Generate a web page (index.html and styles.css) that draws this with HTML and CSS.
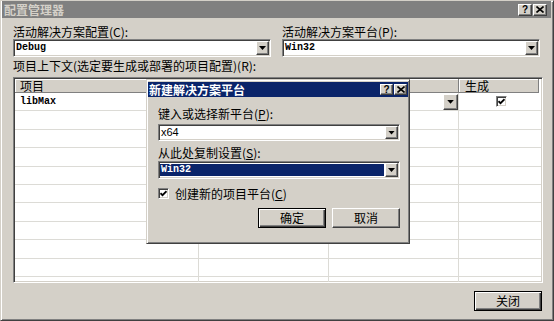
FILE: index.html
```html
<!DOCTYPE html>
<html lang="zh-CN">
<head>
	<meta charset="UTF-8">
	<title>配置管理器</title>
	<link rel="stylesheet" href="styles.css">
</head>
<body>
	<div class="win">
		<div class="caption inactive">
			<span class="caption-text">配置管理器</span>
			<span class="caption-btns">
				<span class="cbtn help">?</span>
				<span class="cbtn"><svg width="8" height="7" viewBox="0 0 8 7"><path d="M0.5 0.5L7.5 6.5M7.5 0.5L0.5 6.5" stroke="#000" stroke-width="1.6" fill="none"/></svg></span>
			</span>
		</div>
		<div class="body">
			<div class="fields">
				<div class="field">
					<div class="label">活动解决方案配置(C):</div>
					<div class="combo"><span class="combo-text mono">Debug</span><span class="drop"></span></div>
				</div>
				<div class="field">
					<div class="label">活动解决方案平台(P):</div>
					<div class="combo"><span class="combo-text mono">Win32</span><span class="drop"></span></div>
				</div>
			</div>
			<div class="label ctx">项目上下文(选定要生成或部署的项目配置)(R):</div>
			<div class="grid">
				<div class="row head">
					<div class="hcell">项目</div>
					<div class="hcell"></div>
					<div class="hcell"></div>
					<div class="hcell">生成</div>
				</div>
				<div class="row">
					<div class="cell mono">libMax</div>
					<div class="cell"><span class="grow"></span><span class="drop small"></span></div>
					<div class="cell"><span class="grow"></span><span class="drop small"></span></div>
					<div class="cell center"><span class="check"><svg width="7" height="7" viewBox="0 0 7 7"><path d="M0.5 3.2L2.5 5.2L6.5 1.2" stroke="#000" stroke-width="1.7" fill="none"/></svg></span></div>
				</div>
				<div class="row"><div class="cell"></div><div class="cell"></div><div class="cell"></div><div class="cell"></div></div>
				<div class="row"><div class="cell"></div><div class="cell"></div><div class="cell"></div><div class="cell"></div></div>
				<div class="row"><div class="cell"></div><div class="cell"></div><div class="cell"></div><div class="cell"></div></div>
				<div class="row"><div class="cell"></div><div class="cell"></div><div class="cell"></div><div class="cell"></div></div>
				<div class="row"><div class="cell"></div><div class="cell"></div><div class="cell"></div><div class="cell"></div></div>
				<div class="row"><div class="cell"></div><div class="cell"></div><div class="cell"></div><div class="cell"></div></div>
				<div class="row"><div class="cell"></div><div class="cell"></div><div class="cell"></div><div class="cell"></div></div>
				<div class="row"><div class="cell"></div><div class="cell"></div><div class="cell"></div><div class="cell"></div></div>
				<div class="row"><div class="cell"></div><div class="cell"></div><div class="cell"></div><div class="cell"></div></div>
				<div class="row"><div class="cell"></div><div class="cell"></div><div class="cell"></div><div class="cell"></div></div>
			</div>
			<div class="footer">
				<button class="btn default">关闭</button>
			</div>
		</div>

		<div class="dialog">
			<div class="caption active">
				<span class="caption-text">新建解决方案平台</span>
				<span class="caption-btns">
					<span class="cbtn help">?</span>
					<span class="cbtn"><svg width="8" height="7" viewBox="0 0 8 7"><path d="M0.5 0.5L7.5 6.5M7.5 0.5L0.5 6.5" stroke="#000" stroke-width="1.6" fill="none"/></svg></span>
				</span>
			</div>
			<div class="dlg-body">
				<div class="label">键入或选择新平台(<u>P</u>):</div>
				<div class="combo short"><span class="combo-text sans">x64</span><span class="drop"></span></div>
				<div class="label gap">从此处复制设置(<u>S</u>):</div>
				<div class="combo"><span class="combo-text mono selected">Win32</span><span class="drop"></span></div>
				<div class="check-row">
					<span class="check"><svg width="7" height="7" viewBox="0 0 7 7"><path d="M0.5 3.2L2.5 5.2L6.5 1.2" stroke="#000" stroke-width="1.7" fill="none"/></svg></span>
					<span>创建新的项目平台(<u>C</u>)</span>
				</div>
				<div class="dlg-btns">
					<button class="btn default">确定</button>
					<button class="btn">取消</button>
				</div>
			</div>
		</div>
	</div>
</body>
</html>
```

FILE: styles.css
```css
*{
	margin: 0;
	padding: 0;
	box-sizing: border-box;
}
body{
	font-family: "Noto Sans CJK SC", sans-serif;
	font-size: 12px;
	color: #000;
	background: #d4d0c8;
}
u{
	text-decoration-thickness: 1px;
	text-underline-offset: 1px;
}
.win{
	position: relative;
	width: 554px;
	height: 321px;
	background: #d4d0c8;
	border: 1px solid;
	border-color: #d4d0c8 #404040 #404040 #d4d0c8;
	box-shadow: inset 1px 1px #fff, inset -1px -1px #808080;
	padding: 0 2px 2px 1px;
	display: flex;
	flex-direction: column;
}

/* title bars */
.caption{
	height: 17px;
	display: flex;
	align-items: center;
	justify-content: space-between;
	padding: 0 4px 0 2px;
	font-weight: bold;
	line-height: 14px;
}
.caption.inactive{
	background: #808080;
	color: #d4d0c8;
}
.caption.active{
	height: 15px;
	background: #0a246a;
	color: #fff;
	padding: 0 1px 0 1px;
}
.caption-btns{
	display: flex;
	gap: 1px;
}
.cbtn{
	width: 14px;
	height: 12px;
	display: flex;
	align-items: center;
	justify-content: center;
	background: #d4d0c8;
	border: 1px solid;
	border-color: #fff #404040 #404040 #fff;
	box-shadow: inset -1px -1px #808080;
}
.active .cbtn{
	width: 13px;
	height: 11px;
}
.cbtn.help{
	font: bold 10px/10px "Liberation Sans", sans-serif;
	color: #000;
}

/* main body */
.body{
	flex: 1;
	display: flex;
	flex-direction: column;
	padding: 7px 8px 0 11px;
}
.fields{
	display: grid;
	grid-template-columns: 1fr 1fr;
	column-gap: 11px;
	padding-right: 3px;
}
.label{
	height: 14px;
	line-height: 14px;
	white-space: nowrap;
}
.label.ctx{
	margin-top: 2px;
}
.mono{
	font-family: "Liberation Mono", monospace;
	font-size: 10px;
	font-weight: bold;
}
.sans{
	font-family: "Liberation Sans", sans-serif;
	font-size: 11px;
}
.combo{
	height: 18px;
	display: flex;
	background: #fff;
	border: 1px solid;
	border-color: #808080 #fff #fff #808080;
	box-shadow: inset 1px 1px #404040, inset -1px -1px #d4d0c8;
	padding: 1px;
}
.combo.short{
	height: 17px;
}
.combo-text{
	flex: 1;
	padding-left: 1px;
	line-height: 14px;
	white-space: nowrap;
}
.short .combo-text{
	line-height: 13px;
}
.combo-text.selected{
	background: #0a246a;
	color: #fff;
	margin: 1px 1px 1px 0;
	line-height: 12px;
}
.drop{
	width: 13px;
	display: flex;
	align-items: center;
	justify-content: center;
	background: #d4d0c8;
	border: 1px solid;
	border-color: #fff #404040 #404040 #fff;
	box-shadow: inset -1px -1px #808080;
}
.drop::after{
	content: "";
	width: 7px;
	height: 4px;
	background: #000;
	clip-path: polygon(0 0, 100% 0, 50% 100%);
}
.drop.small{
	width: 15px;
	height: 16px;
}

/* project grid */
.grid{
	margin-top: 4px;
	height: 206px;
	background: #fff;
	border: 1px solid;
	border-color: #808080 #fff #fff #808080;
	box-shadow: inset 1px 1px #404040, inset -1px -1px #d4d0c8;
	padding: 1px;
	overflow: hidden;
}
.row{
	display: grid;
	grid-template-columns: 184px 130px 130px 1fr;
	height: 18.4px;
}
.row.head{
	height: 14px;
}
.hcell{
	background: #d4d0c8;
	border-right: 1px solid #808080;
	border-bottom: 1px solid #808080;
	box-shadow: inset 1px 1px #fff;
	padding-left: 5px;
	line-height: 13px;
}
.hcell:last-child{
	padding-left: 6px;
	margin-right: 2px;
}
.cell{
	display: flex;
	align-items: center;
	border-right: 1px solid #dcdbd6;
	border-bottom: 1px solid #dcdbd6;
	padding-left: 5px;
}
.cell:last-child{
	border-right: 0;
}
.cell.center{
	justify-content: center;
	padding-left: 2px;
}
.grow{
	flex: 1;
}
.check{
	width: 11px;
	height: 11px;
	display: flex;
	align-items: center;
	justify-content: center;
	background: #fff;
	border: 1px solid;
	border-color: #808080 #fff #fff #808080;
	box-shadow: inset 1px 1px #404040, inset -1px -1px #d4d0c8;
}
.footer{
	display: flex;
	justify-content: flex-end;
	margin-top: 8px;
	padding-right: 1px;
}
.btn{
	width: 68px;
	height: 20px;
	font-family: "Noto Sans CJK SC", sans-serif;
	font-size: 12px;
	line-height: 16px;
	color: #000;
	background: #d4d0c8;
	border: 1px solid;
	border-color: #fff #404040 #404040 #fff;
	box-shadow: inset -1px -1px #808080;
}
.btn.default{
	border: 1px solid #000;
	box-shadow: inset 1px 1px #fff, inset -1px -1px #404040, inset -2px -2px #808080;
}

/* new platform dialog */
.dialog{
	position: absolute;
	left: 145px;
	top: 78px;
	width: 264px;
	height: 165px;
	background: #d4d0c8;
	border: 1px solid;
	border-color: #d4d0c8 #404040 #404040 #d4d0c8;
	box-shadow: inset 1px 1px #fff, inset -1px -1px #808080;
	padding: 2px 1px 0 1px;
}
.dlg-body{
	padding: 10px 8px 0 10px;
}
.label.gap{
	margin-top: 5px;
}
.dlg-body .label + .combo{
	margin-top: 1px;
}
.dlg-body .label + .combo.short{
	margin-top: 3px;
}
.check-row{
	display: flex;
	align-items: center;
	gap: 6px;
	height: 13px;
	margin-top: 8px;
	line-height: 13px;
}
.dlg-btns{
	display: flex;
	justify-content: flex-end;
	gap: 6px;
	margin-top: 8px;
}
```
